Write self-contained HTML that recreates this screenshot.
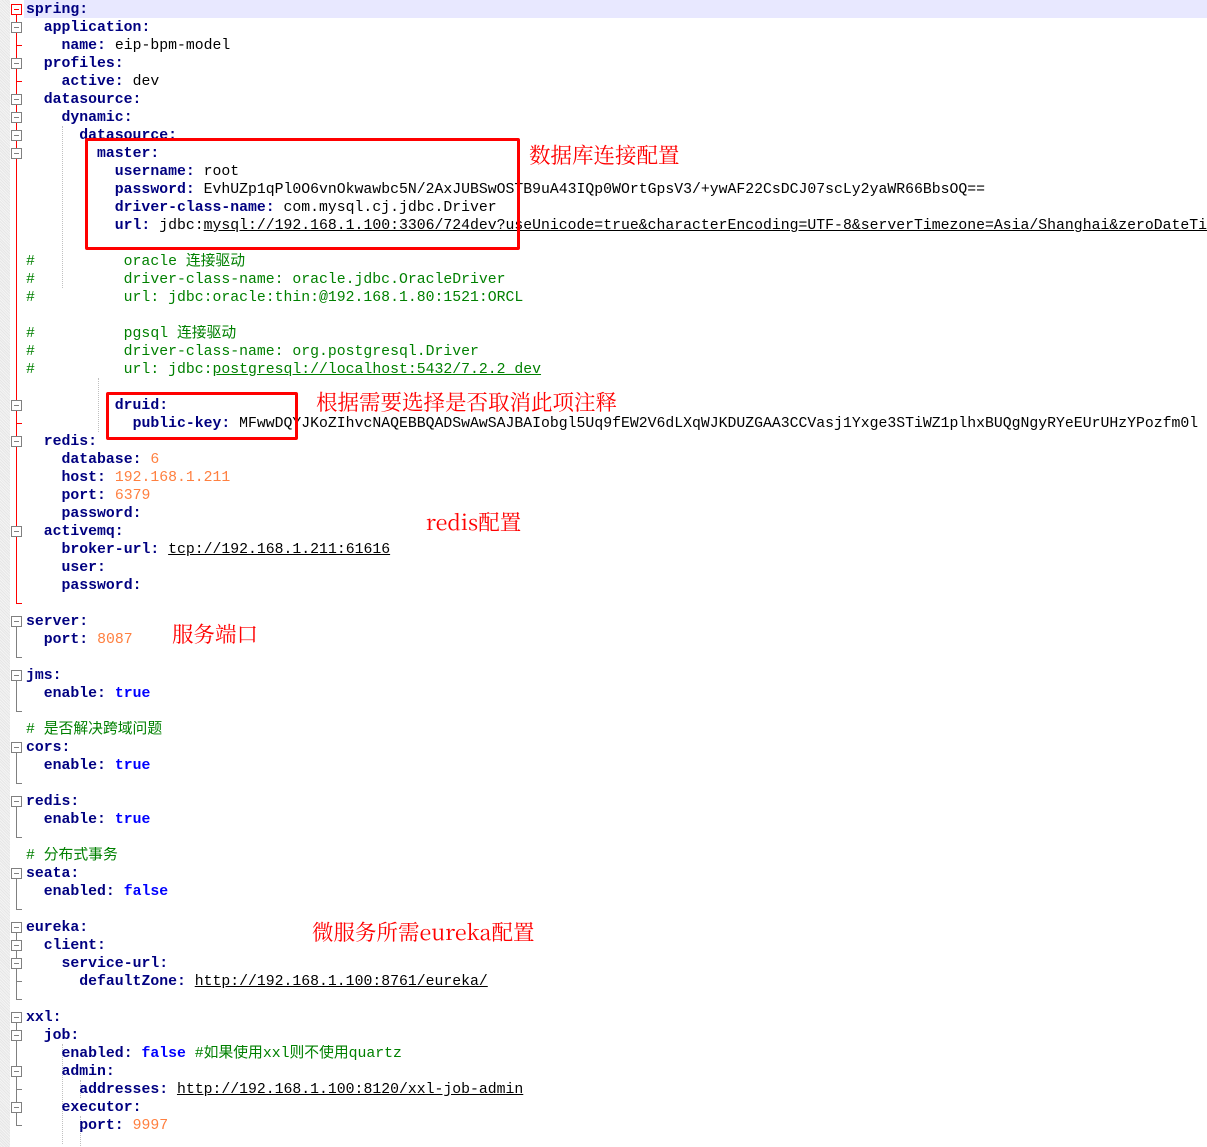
<!DOCTYPE html>
<html><head><meta charset="utf-8">
<style>
html,body{margin:0;padding:0;background:#fff;width:1207px;height:1147px;overflow:hidden;position:relative}
#margin{position:absolute;left:0;top:0;width:10px;height:1147px;background:repeating-linear-gradient(45deg,#e6e6e6 0 1px,#f4f4f4 1px 2px)}
#code{position:absolute;left:0;top:1px;width:1207px;height:1146px;overflow:hidden}
.l{position:absolute;left:26px;right:0;overflow:hidden;height:18px;line-height:18px;white-space:pre;font-family:"Liberation Mono","Noto Sans CJK SC",monospace;font-size:14.8px;color:#000}
.k{color:#000080;font-weight:bold}
.n{color:#ff8040}
.b{color:#0000ff;font-weight:bold}
.c{color:#008000}
.u{text-decoration:underline}
.hl{position:absolute;left:24px;top:0;width:1183px;height:18px;background:#e8e8ff}
.box{position:absolute;left:11px;width:9px;height:9px;border:1px solid #808080;background:#fff;box-sizing:content-box}
.box:after{content:"";position:absolute;left:2px;top:4px;width:5px;height:1px;background:#808080}
.box.r{border-color:#f00}.box.r:after{background:#f00}
.vl{position:absolute;left:16px;width:1px;background:#808080}
.vl.r{background:#f00}
.tk{position:absolute;left:16px;width:6px;height:1px;background:#808080}
.tk.r{background:#f00}
.rb{position:absolute;border:3px solid #f00;border-radius:2px}
.ann{position:absolute;color:#f00;font-family:"Noto Serif CJK SC","Liberation Serif",serif;font-size:21.5px;line-height:26px;white-space:nowrap}
.g{position:absolute;width:0;border-left:1px dotted #c0c0c0}
</style></head><body>
<div id="margin"></div>
<div class="hl"></div>
<div class="g" style="left:62px;top:126px;height:162px"></div>
<div class="g" style="left:98px;top:378px;height:54px"></div>
<div class="g" style="left:62px;top:1044px;height:100px"></div>
<div class="g" style="left:80px;top:1080px;height:18px"></div>
<div class="g" style="left:80px;top:1116px;height:30px"></div>
<div id="code">
<div class="l" style="top:0px"><span class="k">spring:</span></div>
<div class="l" style="top:18px">  <span class="k">application:</span></div>
<div class="l" style="top:36px">    <span class="k">name:</span> eip-bpm-model</div>
<div class="l" style="top:54px">  <span class="k">profiles:</span></div>
<div class="l" style="top:72px">    <span class="k">active:</span> dev</div>
<div class="l" style="top:90px">  <span class="k">datasource:</span></div>
<div class="l" style="top:108px">    <span class="k">dynamic:</span></div>
<div class="l" style="top:126px">      <span class="k">datasource:</span></div>
<div class="l" style="top:144px">        <span class="k">master:</span></div>
<div class="l" style="top:162px">          <span class="k">username:</span> root</div>
<div class="l" style="top:180px">          <span class="k">password:</span> EvhUZp1qPl0O6vnOkwawbc5N/2AxJUBSwOSTB9uA43IQp0WOrtGpsV3/+ywAF22CsDCJ07scLy2yaWR66BbsOQ==</div>
<div class="l" style="top:198px">          <span class="k">driver-class-name:</span> com.mysql.cj.jdbc.Driver</div>
<div class="l" style="top:216px">          <span class="k">url:</span> jdbc:<span class="u">mysql://192.168.1.100:3306/724dev?useUnicode=true&amp;characterEncoding=UTF-8&amp;serverTimezone=Asia/Shanghai&amp;zeroDateTimeBehavior</span></div>
<div class="l c" style="top:252px">#          oracle 连接驱动</div>
<div class="l c" style="top:270px">#          driver-class-name: oracle.jdbc.OracleDriver</div>
<div class="l c" style="top:288px">#          url: jdbc:oracle:thin:@192.168.1.80:1521:ORCL</div>
<div class="l c" style="top:324px">#          pgsql 连接驱动</div>
<div class="l c" style="top:342px">#          driver-class-name: org.postgresql.Driver</div>
<div class="l c" style="top:360px">#          url: jdbc:<span class="u">postgresql://localhost:5432/7.2.2_dev</span></div>
<div class="l" style="top:396px">          <span class="k">druid:</span></div>
<div class="l" style="top:414px">            <span class="k">public-key:</span> MFwwDQYJKoZIhvcNAQEBBQADSwAwSAJBAIobgl5Uq9fEW2V6dLXqWJKDUZGAA3CCVasj1Yxge3STiWZ1plhxBUQgNgyRYeEUrUHzYPozfm0l</div>
<div class="l" style="top:432px">  <span class="k">redis:</span></div>
<div class="l" style="top:450px">    <span class="k">database:</span> <span class="n">6</span></div>
<div class="l" style="top:468px">    <span class="k">host:</span> <span class="n">192.168.1.211</span></div>
<div class="l" style="top:486px">    <span class="k">port:</span> <span class="n">6379</span></div>
<div class="l" style="top:504px">    <span class="k">password:</span></div>
<div class="l" style="top:522px">  <span class="k">activemq:</span></div>
<div class="l" style="top:540px">    <span class="k">broker-url:</span> <span class="u">tcp://192.168.1.211:61616</span></div>
<div class="l" style="top:558px">    <span class="k">user:</span></div>
<div class="l" style="top:576px">    <span class="k">password:</span></div>
<div class="l" style="top:612px"><span class="k">server:</span></div>
<div class="l" style="top:630px">  <span class="k">port:</span> <span class="n">8087</span></div>
<div class="l" style="top:666px"><span class="k">jms:</span></div>
<div class="l" style="top:684px">  <span class="k">enable:</span> <span class="b">true</span></div>
<div class="l c" style="top:720px"># 是否解决跨域问题</div>
<div class="l" style="top:738px"><span class="k">cors:</span></div>
<div class="l" style="top:756px">  <span class="k">enable:</span> <span class="b">true</span></div>
<div class="l" style="top:792px"><span class="k">redis:</span></div>
<div class="l" style="top:810px">  <span class="k">enable:</span> <span class="b">true</span></div>
<div class="l c" style="top:846px"># 分布式事务</div>
<div class="l" style="top:864px"><span class="k">seata:</span></div>
<div class="l" style="top:882px">  <span class="k">enabled:</span> <span class="b">false</span></div>
<div class="l" style="top:918px"><span class="k">eureka:</span></div>
<div class="l" style="top:936px">  <span class="k">client:</span></div>
<div class="l" style="top:954px">    <span class="k">service-url:</span></div>
<div class="l" style="top:972px">      <span class="k">defaultZone:</span> <span class="u">http://192.168.1.100:8761/eureka/</span></div>
<div class="l" style="top:1008px"><span class="k">xxl:</span></div>
<div class="l" style="top:1026px">  <span class="k">job:</span></div>
<div class="l" style="top:1044px">    <span class="k">enabled:</span> <span class="b">false</span> <span class="c">#如果使用xxl则不使用quartz</span></div>
<div class="l" style="top:1062px">    <span class="k">admin:</span></div>
<div class="l" style="top:1080px">      <span class="k">addresses:</span> <span class="u">http://192.168.1.100:8120/xxl-job-admin</span></div>
<div class="l" style="top:1098px">    <span class="k">executor:</span></div>
<div class="l" style="top:1116px">      <span class="k">port:</span> <span class="n">9997</span></div>
</div>
<div id="gut"></div>
<div class="rb" style="left:85px;top:138px;width:429px;height:106px"></div>
<div class="rb" style="left:106px;top:392px;width:186px;height:42px"></div>
<div class="ann" style="left:529px;top:142px">数据库连接配置</div>
<div class="ann" style="left:316px;top:389px">根据需要选择是否取消此项注释</div>
<div class="ann" style="left:426px;top:509px">redis配置</div>
<div class="ann" style="left:172px;top:621px">服务端口</div>
<div class="ann" style="left:312px;top:919px">微服务所需eureka配置</div>
<script>
var g=document.getElementById('gut'),h='';
function vl(a,b,r){h+='<div class="vl'+(r?' r':'')+'" style="top:'+(a*18+9)+'px;height:'+((b-a)*18)+'px"></div>';}
function tk(i,r){h+='<div class="tk'+(r?' r':'')+'" style="top:'+(i*18+9)+'px"></div>';}
function bx(i,r){h+='<div class="box'+(r?' r':'')+'" style="top:'+(i*18+4)+'px"></div>';}
vl(0,33,1);tk(33,1);
[2,4,23].forEach(function(i){tk(i,1)});
[[34,36],[37,39],[41,43],[44,46],[48,50],[51,55],[56,62]].forEach(function(p){vl(p[0],p[1],0);tk(p[1],0)});
tk(54,0);tk(60,0);
bx(0,1);[1,3,5,6,7,8,22,24,29].forEach(function(i){bx(i,0)});
[34,37,41,44,48,51,52,53,56,57,59,61].forEach(function(i){bx(i,0)});
g.innerHTML=h;
</script>
</body></html>
